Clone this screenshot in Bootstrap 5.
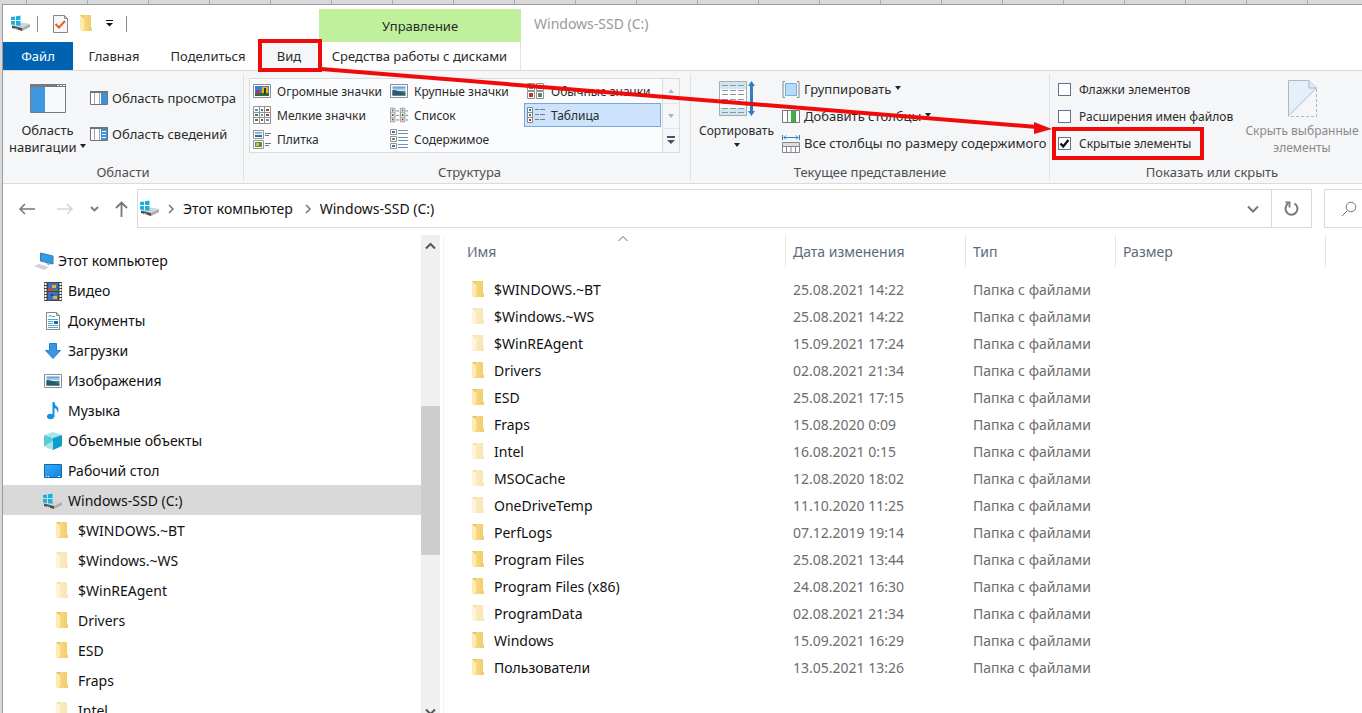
<!DOCTYPE html>
<html lang="ru">
<head>
<meta charset="utf-8">
<meta name="viewport" content="width=device-width, initial-scale=1">
<title>Windows-SSD (C:)</title>
<link href="https://cdn.jsdelivr.net/npm/bootstrap@5.3.0/dist/css/bootstrap.min.css" rel="stylesheet">
<style>
  body { font-family: "Noto Sans", "Open Sans", sans-serif; font-size: 14px; line-height: 20px; color: #111; background: #d8d9db; }
  button, input { font: inherit; color: inherit; }
  button { background: none; border: 0; padding: 0; }
  svg { display: block; flex: none; }

  .desk-strip { height: 4px; background: repeating-linear-gradient(90deg, #d8d9db 0 26px, #a9aaad 26px 27px, #d8d9db 27px 61px); }
  .win { margin-left: 2px; border: 1px solid #9a9b9d; border-width: 1px 0 0 1px; background: #fff; }

  /* title bar and ribbon tabs */
  .quick { height: 37px; padding-left: 8px; }
  .quick .sep { width: 1px; height: 16px; margin: 0 15px 0 6px; background: #8c8c8c; }
  .quick .sep:last-child { margin: 0 0 0 12px; }
  .tabs, .ctx, .ribbon { font-size: 13px; color: #2b2b2b; }
  .left-head { width: 316px; }
  .tabs button { height: 28px; }
  .tab-file { width: 70px; background: #0063b1; color: #fff; }
  .tab-home { width: 82px; }
  .tab-share { width: 106px; }
  .tab-view { width: 56px; background: #f5f6f7; }
  .ctx { width: 202px; }
  .ctx-label { height: 33px; margin-top: 4px; background: #c0f09c; }
  .ctx button { height: 28px; border-right: 1px solid #e2e2e2; }
  .win-title { padding: 9px 13px; color: #999; }
  .red-box { position: absolute; border: 4px solid #f00b0b; pointer-events: none; z-index: 3; }
  .red-tab { inset: -3px -5px -2px -3px; }
  .red-check { inset: -3px -13px -3px -6px; }

  /* ribbon */
  .ribbon { height: 114px; background: #f5f6f7; border: 1px solid #dadbdc; border-width: 1px 0; line-height: 17px; }
  .rgroup { flex: none; margin: 3px 0; border-right: 1px solid #e0e1e2; }
  .rgroup:last-of-type { border: 0; }
  .rbody { height: 87px; }
  .rlabel { color: #4f4f4f; text-align: center; padding-top: 3px; }
  .big svg { margin-bottom: 5px; }
  .small-btn { display: flex; align-items: center; gap: 4px; white-space: nowrap; }
  .h27 { height: 27px; }
  .h36 { height: 36px; }
  .rows3 { padding-top: 2px; }
  .rows2 { padding-top: 6px; }
  .g-areas { width: 241px; }
  .g-layout { width: 447px; padding-left: 5px; }
  .g-current { width: 359px; }
  .g-show { width: 316px; padding-left: 8px; }
  .w-nav { width: 87px; padding-top: 10px; padding-left: 2px; }
  .w-nav svg { margin-bottom: 9px; }
  .w-sort { width: 91px; padding-top: 6px; }
  .w-hide { width: 116px; padding-top: 6px; color: #8a8a8a; }
  .gallery, .checks, .w-sort, .w-hide { font-size: 12px; }
  .checks { width: 186px; }
  .gallery { width: 414px; height: 75px; margin-top: 4px; display: grid; grid-template-columns: repeat(3, 137px); grid-auto-rows: 24px; border: 1px solid #dadbdc; background: #fbfcfd; }
  .gallery button { display: flex; align-items: center; gap: 6px; padding: 0 2px; white-space: nowrap; border: 1px solid transparent; }
  .gallery .on { background: #cde3fb; border-color: #7ba6d6; }
  .spin { width: 17px; height: 75px; margin-top: 4px; border: 1px solid #dadbdc; border-left: 0; }
  .spin button { height: 25px; }
  .spin button + button { border-top: 1px solid #e4e5e6; }
  .caret { width: 0; height: 0; border: 3px solid transparent; border-top: 4px solid #222; border-bottom: 0; display: inline-block; }
  .tick { display: flex; align-items: center; gap: 8px; height: 27px; position: relative; width: max-content; white-space: nowrap; }
  .tick .form-check-input { width: 13px; height: 13px; margin: 0; border: 1px solid #5f738f; border-radius: 0; background-color: #fff; box-shadow: none; }
  .tick .form-check-input:checked { background: #fff url("data:image/svg+xml,%3Csvg xmlns='http://www.w3.org/2000/svg' viewBox='0 0 11 11'%3E%3Cpath d='M1.5 5.5 4.2 8.4 9.4 2' fill='none' stroke='%23111' stroke-width='2.3'/%3E%3C/svg%3E") center/11px no-repeat; }
  .arrow { position: absolute; left: 318px; top: -6px; z-index: 3; pointer-events: none; }

  /* address bar */
  .addr-row { height: 51px; padding: 5px 0 7px 15px; }
  .history { width: 119px; }
  .addr { border: 1px solid #d9d9d9; min-width: 0; padding-left: 2px; }
  .addr a { color: #111; text-decoration: none; }
  .refresh { width: 40px; border: 1px solid #d9d9d9; border-left: 0; }
  .search { width: 38px; margin-left: 12px; border: 1px solid #d9d9d9; border-right: 0; padding-left: 16px; overflow: hidden; }
  .search input { width: 0; border: 0; padding: 0; }

  /* panes */
  .panes { min-height: 0; }
  .tree { width: 418px; padding-top: 10px; overflow: hidden; }
  .tree a { display: flex; align-items: center; flex: none; height: 30px; padding-top: 2px; color: #111; text-decoration: none; }
  .tree .l0 { padding-left: 31px; gap: 4px; }
  .tree .l1 { padding-left: 40px; gap: 5px; }
  .tree .l2 { padding-left: 53px; gap: 9px; }
  .tree .sel { background: #d9d9d9; }
  .sbar { width: 19px; background: #f0f0f0; }
  .sbar .cap { height: 22px; flex: none; }
  .sbar .gap { height: 149px; flex: none; }
  .sbar .thumb { height: 149px; flex: none; background: #cdcdcd; }
  .files { border-left: 1px solid #f3f3f3; margin-left: 3px; min-width: 0; overflow: hidden; }
  .files table { width: 100%; table-layout: fixed; border-collapse: separate; border-spacing: 0; }
  .files th { position: relative; height: 32px; padding: 2px 7px 0; font-weight: 400; color: #5c6b80; border-right: 1px solid #e5e5e5; }
  .files th:last-child { border: 0; }
  .files th:first-child { padding-left: 23px; }
  .files td { height: 27px; padding: 0 7px; color: #6d6d6d; white-space: nowrap; }
  .files td:first-child { padding-left: 28px; color: #111; }
  .files .pad td { height: 9px; }
  .name-cell { gap: 9px; }
  .c-name { width: 342px; } .c-date { width: 180px; } .c-type { width: 150px; } .c-size { width: 210px; }
  .sorted { position: absolute; left: 51%; top: 0; }
  .fade-icon { opacity: .5; }
</style>
</head>
<body class="d-flex flex-column vh-100 overflow-hidden">
<svg width="0" height="0" class="position-absolute" aria-hidden="true">
  <defs>
    <linearGradient id="gf" x1="0" x2="1"><stop offset="0" stop-color="#fbe08f"/><stop offset="1" stop-color="#f0cb68"/></linearGradient>
    <linearGradient id="gb" x1="0" y1="0" x2="1" y2="1"><stop offset="0" stop-color="#3da9f5"/><stop offset="1" stop-color="#0a84e8"/></linearGradient>
    <linearGradient id="gs" x1="0" y1="0" x2="0" y2="1"><stop offset="0" stop-color="#4f93dd"/><stop offset=".5" stop-color="#dceefa"/><stop offset=".55" stop-color="#4c8377"/><stop offset="1" stop-color="#295f82"/></linearGradient>
  </defs>
  <symbol id="folder" viewBox="0 0 13 18"><path d="M0 0h11v12l1 1v3H3z" fill="url(#gf)"/><path d="M0 0v15l3 2V15l1-1V4z" fill="#ffebb0"/><path d="M0 0h4v3z" fill="#e8c068"/></symbol>
  <symbol id="drive" viewBox="0 0 20 17"><path d="M1 10.500l10-3 8 1.500-8 4z" fill="#d3d5d6"/><path d="M1 10.500l10 2.500v3L1 13z" fill="#4c5052"/><path d="M11 13l8-4v3l-8 4z" fill="#a9acae"/><path d="M4 13.500l3 1" stroke="#d0d0d0"/><path d="M0 2l4-.6V5H0zM5 1.300L9.500.5V5H5zM0 6h4v4l-4-.5zM5 6h4.500v4.800L5 10.200z" fill="#17b1e0"/></symbol>
  <symbol id="pic" viewBox="0 0 18 14"><path d="M.5.5h17v13H.5z" fill="#fff" stroke="#8b8f93"/><path d="M2.500 2.500h13v9h-13z" fill="url(#gs)"/><path d="M2.500 6q6 0 13 4.500v1h-13z" fill="#2b5a6c"/></symbol>
</svg>

<div class="desk-strip flex-shrink-0"></div>
<div class="win d-flex flex-column flex-grow-1 overflow-hidden">
  <header class="d-flex flex-shrink-0">
    <div class="left-head flex-shrink-0">
      <div class="quick d-flex align-items-center">
        <svg width="20" height="17"><use href="#drive"/></svg>
        <span class="sep"></span>
        <button aria-label="Свойства"><svg width="15" height="18" viewBox="0 0 15 18"><path d="M.5.500h11l3 3v14H.500z" fill="#f7f7f9" stroke="#85878b"/><path d="M11.500.500v3h3" fill="none" stroke="#85878b"/><path d="M2.500 9l3.500 3.500L12 6" fill="none" stroke="#e2611c" stroke-width="2"/></svg></button>
        <button class="ms-2 ps-1" aria-label="Новая папка"><svg width="13" height="18"><use href="#folder"/></svg></button>
        <button class="ms-2 ps-1" aria-label="Настроить панель"><svg width="9" height="7" viewBox="0 0 9 7"><path d="M1 .5h7" stroke="#111"/><path d="M1 3h7L4.500 6.500z" fill="#111"/></svg></button>
        <span class="sep"></span>
      </div>
      <nav class="tabs d-flex">
        <button class="tab-file">Файл</button>
        <button class="tab-home">Главная</button>
        <button class="tab-share">Поделиться</button>
        <div class="position-relative"><button class="tab-view">Вид</button><span class="red-box red-tab"></span></div>
      </nav>
    </div>
    <div class="ctx flex-shrink-0">
      <div class="ctx-label d-flex align-items-center justify-content-center">Управление</div>
      <button class="w-100">Средства работы с дисками</button>
    </div>
    <div class="win-title">Windows-SSD (C:)</div>
  </header>

  <section class="ribbon d-flex flex-shrink-0 position-relative">
    <div class="rgroup g-areas">
      <div class="rbody d-flex">
        <button class="w-nav d-flex flex-column align-items-center">
          <svg width="36" height="29" viewBox="0 0 36 29"><path d="M.5.500h35v28H.500z" fill="#f8f9fa" stroke="#77797c"/><path d="M0 0h36v3H0z" fill="#77797c"/><path d="M27 1.500h2m1 0h2m1 0h2" stroke="#fff"/><path d="M1 3h14v25H1z" fill="#3f97df"/></svg>
          <span>Область<br>навигации <i class="caret mb-1"></i></span>
        </button>
        <div class="rows2">
          <button class="small-btn h36"><svg width="18" height="14" viewBox="0 0 18 14"><path d="M.5.500h17v13H.500z" fill="#fff" stroke="#6f7276"/><path d="M0 0h18v2H0z" fill="#6f7276"/><path d="M4.500 2v11M9.500 2v11" stroke="#a5a7aa"/><path d="M11 2h6v11h-6z" fill="#3c93dc"/></svg>Область просмотра</button>
          <button class="small-btn h36"><svg width="18" height="14" viewBox="0 0 18 14"><path d="M.5.500h17v13H.500z" fill="#fff" stroke="#6f7276"/><path d="M0 0h18v2H0z" fill="#6f7276"/><path d="M4.500 2v11M9.500 2v11" stroke="#a5a7aa"/><path d="M11 2h6v11h-6z" fill="#3c93dc"/><path d="M12 4.500h4M12 7.500h4M12 10.500h4" stroke="#fff"/></svg>Область сведений</button>
        </div>
      </div>
      <div class="rlabel">Области</div>
    </div>

    <div class="rgroup g-layout">
      <div class="rbody d-flex">
        <div class="gallery">
          <button><svg width="18" height="14" viewBox="0 0 18 14"><path d="M.5.500h17v13H.500z" fill="#fff" stroke="#8b8f93"/><path d="M2 2h14v10H2z" fill="#3f7fd0"/><path d="M2 9h14v3H2z" fill="#2f6a35"/><path d="M9 3h6v6H9z" fill="#e8b914"/><path d="M11 4h2v6h-2z" fill="#4a2f10"/><path d="M3 6h4v4H3z" fill="#a03a68"/></svg>Огромные значки</button>
          <button><svg width="18" height="14"><use href="#pic"/></svg>Крупные значки</button>
          <button><svg width="18" height="16" viewBox="0 0 18 16"><g fill="#fff" stroke="#909396"><path d="M.5.500h7v7h-7zM9.500.500h7v7h-7zM.5 8.500h7v7h-7zM9.500 8.500h7v7h-7z"/></g><path d="M2 2h4v4H2zM11 10h4v4h-4z" fill="#5a8a6a"/><path d="M11 2h4v4h-4zM2 10h4v4H2z" fill="#b63b22"/></svg>Обычные значки</button>
          <button><svg width="18" height="18" viewBox="0 0 18 18"><path d="M.5.500h17v17H.500zM6.500.500v17M11.500.500v17M.5 6.500h17M.5 11.500h17" fill="#fff" stroke="#909396"/><path d="M2 3h3v2H2zM8 8h2v2H8zM13 13h3v2h-3z" fill="#4b9bb5"/><path d="M8 3h2v2H8zM2 8h3v2H2zM2 13h3v2H2z" fill="#4c7a4a"/><path d="M13 3h3v2h-3zM13 8h3v2h-3zM8 13h2v2H8z" fill="#b63b22"/></svg>Мелкие значки</button>
          <button><svg width="18" height="16" viewBox="0 0 20 16"><path d="M.5.500h5v15h-5zM.5 5.500h5M.5 10.500h5M11.500.500h5v15h-5zM11.500 5.500h5M11.500 10.500h5" fill="#fff" stroke="#909396"/><path d="M7 3.500h3M7 8.500h3M7 13.500h3M17.500 3.500H20M17.500 8.500H20M17.500 13.500H20" stroke="#777"/><path d="M2 2h2v2H2zM13 2h2v2h-2z" fill="#2b7f9b"/><path d="M2 7h2v2H2zM13 7h2v2h-2z" fill="#556b40"/><path d="M2 12h2v2H2zM13 12h2v2h-2z" fill="#a33"/></svg>Список</button>
          <button class="on"><svg width="18" height="16" viewBox="0 0 18 16"><path d="M.5.500h5v15h-5zM.5 5.500h5M.5 10.500h5" fill="#fff" stroke="#808890"/><path d="M8 2.500h4M13 2.500h5M8 7.500h4M13 7.500h5M8 12.500h4M13 12.500h5" stroke="#777f8a"/><path d="M2 2h2v2H2z" fill="#2b7f9b"/><path d="M2 7h2v2H2z" fill="#556b40"/><path d="M2 12h2v2H2z" fill="#a33"/></svg>Таблица</button>
          <button><svg width="18" height="19" viewBox="0 0 18 19"><path d="M.5.500h10v8H.500zM.5 10.500h10v8H.500z" fill="#fff" stroke="#909396"/><path d="M2 2h7v5H2z" fill="url(#gs)"/><path d="M2 12h7v5H2z" fill="#4d9152"/><path d="M3 13h3v3H3z" fill="#d9b944"/><path d="M12 3.500h6M12 5.500h4M12 13.500h6M12 15.500h4" stroke="#777"/></svg>Плитка</button>
          <button><svg width="18" height="20" viewBox="0 0 18 20"><path d="M.5.500h6v5h-6zM.5 7.500h6v5h-6zM.5 14.500h6v5h-6z" fill="#fff" stroke="#909396"/><path d="M2 2h3v2H2zM2 16h3v2H2z" fill="#2b7f9b"/><path d="M2 9h3v2H2z" fill="#7a8a40"/><path d="M8 1.500h10M8 8.500h10M8 15.500h10" stroke="#8a8e92"/><path d="M8 4.500h10M8 11.500h10M8 18.500h10" stroke="#5c92c8"/></svg>Содержимое</button>
        </div>
        <div class="spin d-flex flex-column">
          <button class="d-flex align-items-center justify-content-center" aria-label="Вверх"><svg width="6" height="4" viewBox="0 0 6 4"><path d="M0 4l3-4 3 4z" fill="#b0b4bd"/></svg></button>
          <button class="d-flex align-items-center justify-content-center" aria-label="Вниз"><svg width="6" height="4" viewBox="0 0 6 4"><path d="M0 0h6L3 4z" fill="#b0b4bd"/></svg></button>
          <button class="d-flex align-items-center justify-content-center" aria-label="Ещё"><svg width="8" height="8" viewBox="0 0 8 8"><path d="M0 0h8v2H0zM0 4h8L4 8z" fill="#44546a"/></svg></button>
        </div>
      </div>
      <div class="rlabel">Структура</div>
    </div>

    <div class="rgroup g-current">
      <div class="rbody d-flex">
        <button class="big w-sort d-flex flex-column align-items-center">
          <svg width="36" height="37" viewBox="0 0 36 37"><path d="M.5 1.500h27v34H.500z" fill="#fafbfc" stroke="#a9adb1"/><path d="M1 2h26v7H1zM1 28h26v7H1z" fill="#cfe6ee"/><path d="M3 5.500h22M3 10.500h22M3 14.500h22M3 19.500h22M3 23.500h22M3 28.500h22M3 32.500h22" stroke="#8c979f" stroke-dasharray="6 2"/><path d="M32.500 4v29" stroke="#2d7fc8" stroke-width="3"/><path d="M29 6l3.500-5L36 6zM29 31l3.500 5 3.500-5z" fill="#2d7fc8"/></svg>
          <span>Сортировать</span><i class="caret mt-1"></i>
        </button>
        <div class="rows3">
          <button class="small-btn h27"><svg width="18" height="17" viewBox="0 0 18 17"><path d="M3 .5H1v16h2M15 .500h2v16h-2" fill="none" stroke="#85898e"/><path d="M3.500 2.500h11v12h-11z" fill="#b5dcfb" stroke="#76aede"/></svg>Группировать <i class="caret mb-1"></i></button>
          <button class="small-btn h27"><svg width="18" height="13" viewBox="0 0 18 13"><path d="M.5.500h17v12H.500zM5.500 0v13M13.500 0v13" fill="#fff" stroke="#74787c"/><path d="M9 1h4v11H9z" fill="#2dbb3c"/></svg>Добавить столбцы <i class="caret mb-1"></i></button>
          <button class="small-btn h27"><svg width="18" height="18" viewBox="0 0 18 18"><path d="M.5 0v5M17.500 0v5M2 2.500h14M4 .500l-2 2 2 2M14 .500l2 2-2 2" fill="none" stroke="#2f7fb8"/><path d="M.5 7.500h17v10H.500zM.5 11.500h17M4.500 12v6M9 12v6M13.500 12v6" fill="#fff" stroke="#85898e"/><path d="M1 8h16v3H1z" fill="#ddd"/></svg>Все столбцы по размеру содержимого</button>
        </div>
      </div>
      <div class="rlabel">Текущее представление</div>
    </div>

    <div class="rgroup g-show">
      <div class="rbody d-flex">
        <div class="checks rows3">
          <label class="tick"><input class="form-check-input" type="checkbox">Флажки элементов</label>
          <label class="tick"><input class="form-check-input" type="checkbox">Расширения имен файлов</label>
          <label class="tick"><input class="form-check-input" type="checkbox" checked>Скрытые элементы<span class="red-box red-check"></span></label>
        </div>
        <button class="big w-hide d-flex flex-column align-items-center">
          <svg width="29" height="37" viewBox="0 0 29 37"><path d="M.5.500H21l7.500 7.500L.5 36z" fill="#e6eef9" stroke="#aab9cd"/><path d="M21 .500V8h7.500" fill="#dfe9f6" stroke="#aab9cd"/><path d="M28.500 9v27.500H.500" fill="none" stroke="#aab9cd" stroke-dasharray="3 2"/></svg>
          <span class="text-nowrap">Скрыть выбранные<br>элементы</span>
        </button>
      </div>
      <div class="rlabel">Показать или скрыть</div>
    </div>
    <svg class="arrow" width="736" height="74" viewBox="0 0 736 74"><path d="M0 4L716 62" stroke="#f00b0b" stroke-width="4"/><path d="M713 57l18 7-18 5z" fill="#f00b0b"/></svg>
  </section>

  <div class="addr-row d-flex flex-shrink-0">
    <div class="history d-flex align-items-center flex-shrink-0">
      <button aria-label="Назад"><svg width="18" height="12" viewBox="0 0 18 12"><path d="M17 6H2M7 1L2 6l5 5" fill="none" stroke="#777" stroke-width="1.500"/></svg></button>
      <button class="ms-3 ps-1" aria-label="Вперёд"><svg width="18" height="12" viewBox="0 0 18 12"><path d="M1 6h15M11 1l5 5-5 5" fill="none" stroke="#d5d5d5" stroke-width="1.500"/></svg></button>
      <button class="ms-3" aria-label="Журнал"><svg width="9" height="6" viewBox="0 0 9 6"><path d="M1 1l3.500 3.500L8 1" fill="none" stroke="#777" stroke-width="1.800"/></svg></button>
      <button class="ms-3" aria-label="Вверх"><svg width="13" height="16" viewBox="0 0 13 16"><path d="M6.500 16V2M1 7l5.500-5.500L12 7" fill="none" stroke="#777" stroke-width="1.800"/></svg></button>
    </div>
    <div class="addr d-flex flex-grow-1 align-items-center pe-2">
      <svg class="me-2" width="20" height="17"><use href="#drive"/></svg>
      <svg class="me-2" width="7" height="10" viewBox="0 0 7 10"><path d="M1 1l4 4-4 4" fill="none" stroke="#777" stroke-width="1.500"/></svg>
      <a href="#" class="pe-1">Этот компьютер</a>
      <svg class="mx-2" width="7" height="10" viewBox="0 0 7 10"><path d="M1 1l4 4-4 4" fill="none" stroke="#777" stroke-width="1.500"/></svg>
      <a href="#" class="pe-1">Windows-SSD (C:)</a>
      <button class="ms-auto me-1" aria-label="Список адресов"><svg width="12" height="8" viewBox="0 0 12 8"><path d="M1 1.500l5 5 5-5" fill="none" stroke="#777" stroke-width="2"/></svg></button>
    </div>
    <button class="refresh d-flex align-items-center justify-content-center" aria-label="Обновить"><svg width="15" height="15" viewBox="0 0 15 15"><path d="M10.500 2.500A6 6 0 1 1 4 2.800" fill="none" stroke="#777" stroke-width="2"/><path d="M1.500 1.500h4v5" fill="none" stroke="#777" stroke-width="1.800"/></svg></button>
    <label class="search d-flex align-items-center"><svg width="16" height="16" viewBox="0 0 16 16"><circle cx="10" cy="6" r="4.800" fill="none" stroke="#777"/><path d="M6.500 9.500L1 15" stroke="#777"/></svg><input type="search" aria-label="Поиск"></label>
  </div>

  <main class="panes d-flex flex-grow-1">
    <nav class="tree d-flex flex-column flex-shrink-0" id="tree">
      <a href="#" class="l0"><svg width="20" height="18" viewBox="0 0 20 18"><path d="M6.500 1l12.500 3v8L6.500 9z" fill="#2e9cea" stroke="#3b7bab"/><path d="M12 11l5 1-3 1z" fill="#8a9298"/><path d="M0 14l5-2 10 3-5 3z" fill="#cdd3d8"/></svg>Этот компьютер</a>
      <a href="#" class="l1"><svg width="20" height="19" viewBox="0 0 20 19"><path d="M1 0h18v19H1z" fill="#42464b"/><path d="M2.500 1v18M17.500 1v18" stroke="#fff" stroke-width="2" stroke-dasharray="2 1"/><path d="M5 1h10v8H5zM5 10h10v8H5z" fill="#3f6fc4"/><path d="M9 3h4v3H9zM10 14h4v3h-4z" fill="#dfb52b"/><path d="M5 6h5v3H5z" fill="#c2474b"/><path d="M10 7h5v2h-5z" fill="#3f9150"/><path d="M8 12l3 1-3 1z" fill="#1d2a48"/></svg>Видео</a>
      <a href="#" class="l1"><svg width="20" height="18" viewBox="0 0 20 18"><path d="M3.500.500h10l3 3v14h-13z" fill="#fff" stroke="#85898e"/><path d="M13.500.500v3h3" fill="none" stroke="#85898e"/><path d="M5.500 5l1.500-2 1.500 2M9 4.500h3M5 7.500h10M5 9.500h5M5 11.500h5M5 13.500h10M5 15.500h10" fill="none" stroke="#5aa8cf"/><path d="M11 9h4v3h-4z" fill="#20699b"/></svg>Документы</a>
      <a href="#" class="l1"><svg width="20" height="18" viewBox="0 0 20 18"><path d="M6.500 1.500h7v7h4L10 16.500 2.500 8.500h4z" fill="#3a96e4" stroke="#2a7fc9"/></svg>Загрузки</a>
      <a href="#" class="l1"><svg width="20" height="14" viewBox="-1 0 20 14"><use href="#pic" width="18" height="14"/></svg>Изображения</a>
      <a href="#" class="l1"><svg width="20" height="18" viewBox="0 0 20 18"><ellipse cx="7.500" cy="14.500" rx="3.500" ry="2.800" fill="#1691ea"/><path d="M9.500 0h2q0 3 3 5 2 2 0 6 0-4-3-5v9h-2z" fill="#1691ea"/></svg>Музыка</a>
      <a href="#" class="l1"><svg width="20" height="18" viewBox="0 0 20 18"><path d="M1 3l9-3 9 3-9 3z" fill="#a5e6ea"/><path d="M1 3l9 3v12l-9-4z" fill="#5bc9d3"/><path d="M19 3l-9 3v12l9-4z" fill="#0d9fc9"/><path d="M1 14l9-5v9z" fill="#a5e3e6"/></svg>Объемные объекты</a>
      <a href="#" class="l1"><svg width="20" height="14" viewBox="0 0 20 14"><path d="M1.500.500h17v13h-17z" fill="url(#gb)" stroke="#1567ad"/><path d="M3 12.500h1m1 0h1m9 0h2" stroke="#fff"/></svg>Рабочий стол</a>
      <a href="#" class="l1 sel"><svg width="20" height="17"><use href="#drive"/></svg>Windows-SSD (C:)</a>
    </nav>
    <div class="sbar d-flex flex-column flex-shrink-0 overflow-hidden" aria-hidden="true">
      <div class="cap d-flex align-items-center justify-content-center"><svg width="11" height="8" viewBox="0 0 11 8"><path d="M1 6.500l4.500-4.500L10 6.500" fill="none" stroke="#555" stroke-width="2"/></svg></div>
      <div class="gap"></div><div class="thumb"></div><div class="gap"></div>
      <div class="cap d-flex pt-1 justify-content-center"><svg width="11" height="8" viewBox="0 0 11 8"><path d="M1 1.500L5.500 6 10 1.500" fill="none" stroke="#555" stroke-width="2"/></svg></div>
    </div>
    <div class="files flex-grow-1">
      <table>
        <colgroup><col class="c-name"><col class="c-date"><col class="c-type"><col class="c-size"><col></colgroup>
        <thead><tr>
          <th>Имя<svg class="sorted" width="10" height="7" viewBox="0 0 10 7"><path d="M.5 6L5 1.500 9.500 6" fill="none" stroke="#666"/></svg></th>
          <th>Дата изменения</th><th>Тип</th><th>Размер</th><th></th>
        </tr></thead>
        <tbody id="rows"><tr class="pad"><td colspan="5"></td></tr></tbody>
      </table>
    </div>
  </main>
</div>

<script src="https://cdn.jsdelivr.net/npm/bootstrap@5.3.0/dist/js/bootstrap.bundle.min.js"></script>
<script>
  // name, modified, hidden
  const folders = [
    ['$WINDOWS.~BT', '25.08.2021 14:22', 0], ['$Windows.~WS', '25.08.2021 14:22', 1],
    ['$WinREAgent', '15.09.2021 17:24', 1], ['Drivers', '02.08.2021 21:34', 0],
    ['ESD', '25.08.2021 17:15', 0], ['Fraps', '15.08.2020 0:09', 0],
    ['Intel', '16.08.2021 0:15', 1], ['MSOCache', '12.08.2020 18:02', 1],
    ['OneDriveTemp', '11.10.2020 11:25', 1], ['PerfLogs', '07.12.2019 19:14', 0],
    ['Program Files', '25.08.2021 13:44', 0], ['Program Files (x86)', '24.08.2021 16:30', 0],
    ['ProgramData', '02.08.2021 21:34', 1], ['Windows', '15.09.2021 16:29', 0],
    ['Пользователи', '13.05.2021 13:26', 0]
  ];
  const icon = hidden => `<svg width="13" height="18"${hidden ? ' class="fade-icon"' : ''}><use href="#folder"/></svg>`;
  document.getElementById('rows').insertAdjacentHTML('beforeend', folders.map(([n, d, h]) =>
    `<tr><td><div class="name-cell d-flex align-items-center">${icon(h)}<span>${n}</span></div></td><td>${d}</td><td>Папка с файлами</td><td></td><td></td></tr>`).join(''));
  document.getElementById('tree').insertAdjacentHTML('beforeend', folders.slice(0, 7).map(([n, , h]) =>
    `<a href="#" class="l2">${icon(h)}${n}</a>`).join(''));
</script>
</body>
</html>
